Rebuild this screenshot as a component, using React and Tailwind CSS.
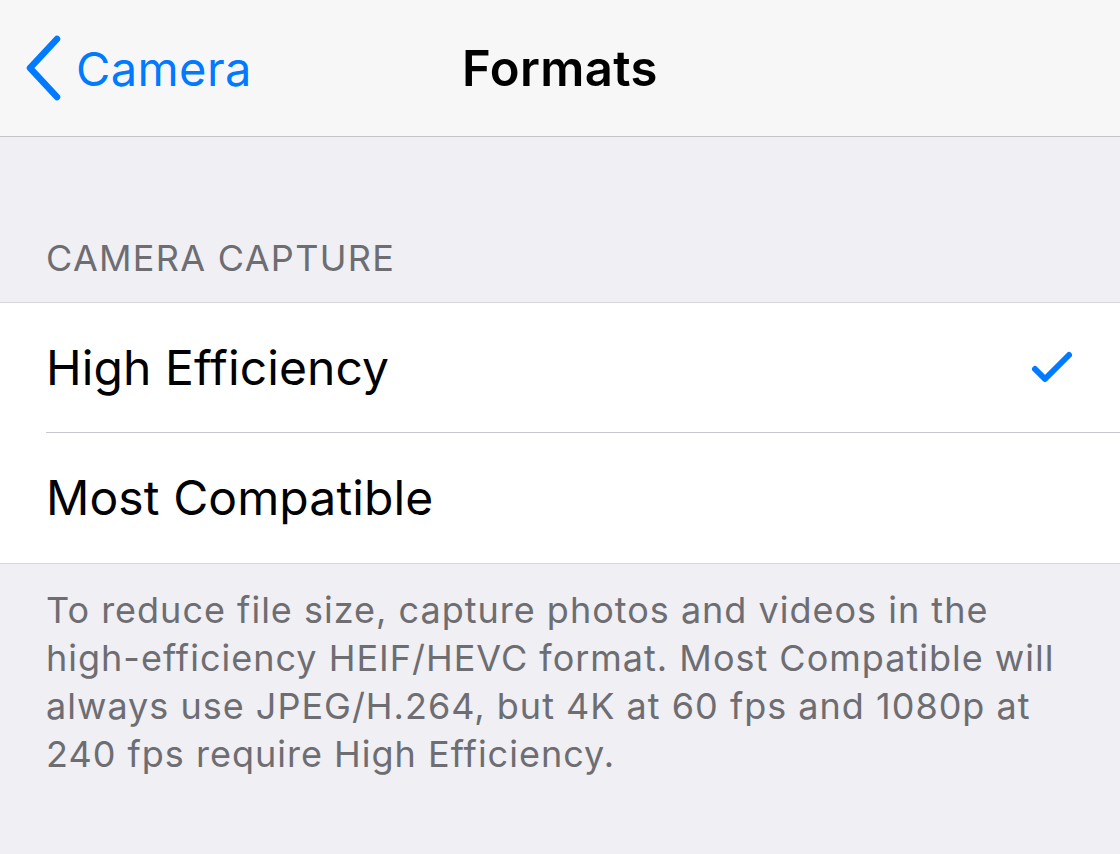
import React from "react";

// iOS Settings > Camera > Formats
const rows = [
  { label: "High Efficiency", checked: true },
  { label: "Most Compatible", checked: false },
];

function Chevron() {
  return (
    <svg width="38" height="66" viewBox="0 0 38 66" className="shrink-0">
      <path d="M33 4 L6 33 L33 62" fill="none" stroke="#007aff" strokeWidth="6.5" strokeLinecap="round" strokeLinejoin="round" />
    </svg>
  );
}

function Check() {
  return (
    <svg width="44" height="36" viewBox="0 0 44 36">
      <path d="M5 19 L15 29 L39 5" fill="none" stroke="#007aff" strokeWidth="6" strokeLinecap="round" strokeLinejoin="round" />
    </svg>
  );
}

export default function App() {
  return (
    <div className="w-[1120px] h-[854px] overflow-hidden bg-[#efeff4] antialiased" style={{ fontFamily: "Inter, 'Liberation Sans', sans-serif" }}>
      {/* NAV */}
      <div className="relative h-[137px] bg-[#f7f7f8] border-b border-[#c4c4c8] flex items-center">
        <div className="flex items-center pl-[24px] gap-[14px] text-[#007aff] text-[47px] leading-none tracking-[0.4px]">
          <Chevron />
          <span>Camera</span>
        </div>
        <div className="absolute inset-0 flex items-center justify-center text-[49px] font-semibold text-black leading-none tracking-[0.4px] pointer-events-none">
          Formats
        </div>
      </div>

      {/* SECTION HEADER */}
      <div className="h-[165px] flex items-end pl-[46px] pb-[26px] text-[36px] text-[#6d6d72] leading-none tracking-[1.3px]">
        CAMERA CAPTURE
      </div>

      {/* ROWS */}
      <div className="bg-white border-t border-b border-[#d8d8dc]">
        {rows.map((r, i) => (
          <div key={r.label} className="pl-[46px]">
            <div className={`h-[130px] flex items-center pr-[46px] ${i < rows.length - 1 ? "border-b border-[#c8c7cc]" : ""}`}>
              <span className="flex-1 text-[48px] text-black leading-none tracking-[0.1px]">{r.label}</span>
              {r.checked && <Check />}
            </div>
          </div>
        ))}
      </div>

      {/* FOOTER */}
      <div className="px-[46px] pt-[22px] text-[36px] leading-[48px] text-[#6d6d72] tracking-[1px] whitespace-nowrap">
        To reduce file size, capture photos and videos in the<br />
        high-efficiency HEIF/HEVC format. Most Compatible will<br />
        always use JPEG/H.264, but 4K at 60 fps and 1080p at<br />
        240 fps require High Efficiency.
      </div>
    </div>
  );
}
